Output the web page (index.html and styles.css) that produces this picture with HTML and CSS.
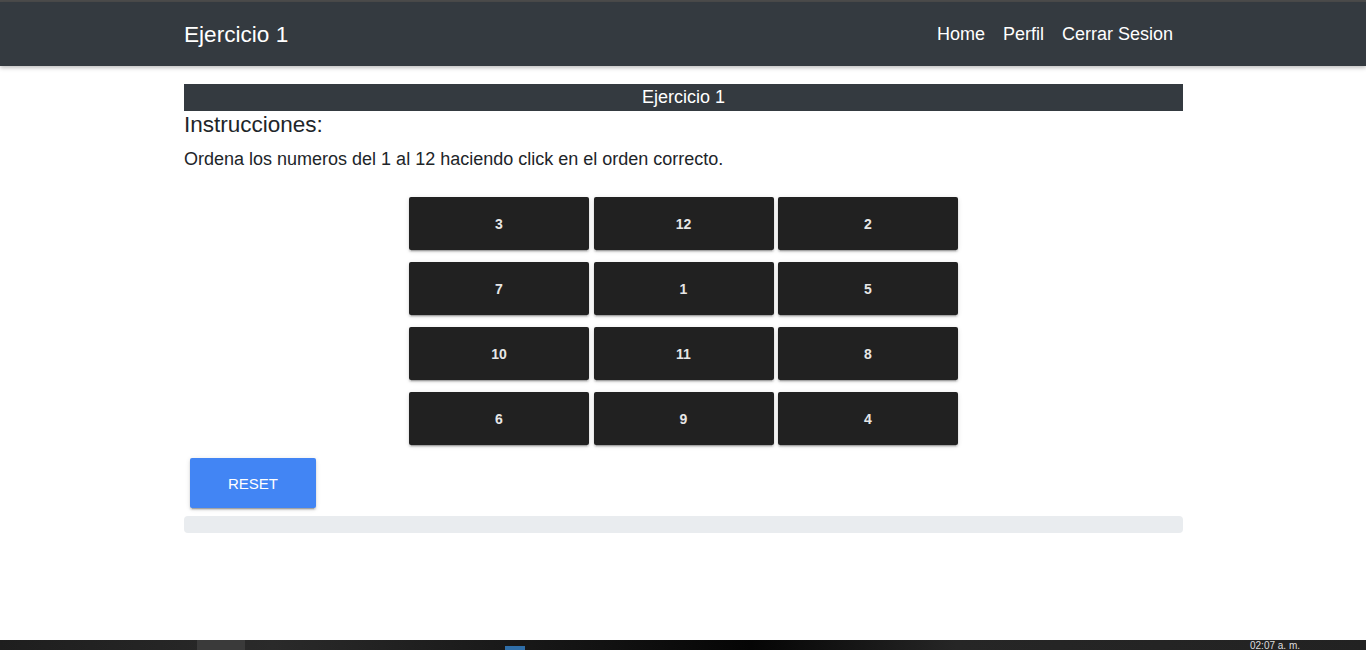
FILE: index.html
```html
<!DOCTYPE html>
<html lang="es">
<head>
<meta charset="utf-8">
<title>Ejercicio 1</title>
<link rel="stylesheet" href="styles.css">
</head>
<body>
<div class="page">
  <nav class="navbar">
    <div class="container nav-inner">
      <a class="brand" href="#">Ejercicio 1</a>
      <ul class="nav-links">
        <li><a href="#">Home</a></li>
        <li><a href="#">Perfil</a></li>
        <li><a href="#">Cerrar Sesion</a></li>
      </ul>
    </div>
  </nav>
  <main class="container main">
    <div class="title-bar">Ejercicio 1</div>
    <h2 class="instr-title">Instrucciones:</h2>
    <p class="instr-text">Ordena los numeros del 1 al 12 haciendo click en el orden correcto.</p>
    <div class="grid">
      <button class="tile">3</button>
      <button class="tile">12</button>
      <button class="tile">2</button>
      <button class="tile">7</button>
      <button class="tile">1</button>
      <button class="tile">5</button>
      <button class="tile">10</button>
      <button class="tile">11</button>
      <button class="tile">8</button>
      <button class="tile">6</button>
      <button class="tile">9</button>
      <button class="tile">4</button>
    </div>
    <button class="reset">RESET</button>
    <div class="progress"></div>
  </main>
</div>
<div class="taskbar">
  <span class="tb-item tb-a"></span>
  <span class="tb-item tb-b"></span>
  <span class="tb-time">02:07 a. m.</span>
</div>
</body>
</html>
```
FILE: styles.css
```css
* { box-sizing: border-box; }
html, body { margin: 0; padding: 0; }
body {
  font-family: "Liberation Sans", Arial, sans-serif;
  color: #212529;
  background: #fff;
  height: 650px;
  overflow: hidden;
  display: flex;
  flex-direction: column;
}
.page { flex: 1; border-top: 2px solid #4b4b4b; }
.container { width: 999px; margin: 0 0 0 184px; }
.navbar {
  background: #343a40;
  height: 64px;
  box-shadow: 0 2px 4px rgba(0,0,0,0.25);
  position: relative;
}
.nav-inner {
  height: 100%;
  display: flex;
  align-items: center;
  justify-content: space-between;
}
.brand {
  color: #fff;
  text-decoration: none;
  font-size: 22.6px;
  padding-top: 1px;
}
.nav-links {
  list-style: none;
  margin: 0;
  padding: 1px 10px 0 0;
  display: flex;
  gap: 18px;
}
.nav-links a {
  color: #fff;
  text-decoration: none;
  font-size: 18px;
}
.main { padding-top: 18px; }
.title-bar {
  background: #343a40;
  color: #fff;
  text-align: center;
  font-size: 18px;
  height: 27px;
  line-height: 27px;
}
.instr-title {
  margin: 1px 0 0;
  font-size: 22.5px;
  font-weight: normal;
  line-height: 26px;
}
.instr-text {
  margin: 10px 0 0;
  font-size: 18px;
  line-height: 23px;
}
.grid {
  margin: 26px auto 0;
  width: 549px;
  display: grid;
  grid-template-columns: 180px 180px 180px;
  column-gap: 4.5px;
  row-gap: 12px;
}
.tile {
  height: 53px;
  background: #212121;
  color: #e6e6e6;
  border: none;
  border-radius: 2px;
  font-family: "Liberation Sans", Arial, sans-serif;
  font-size: 14px;
  font-weight: bold;
  box-shadow: 0 2px 2px rgba(0,0,0,0.14), 0 1px 5px rgba(0,0,0,0.12), 0 3px 1px -2px rgba(0,0,0,0.2);
  cursor: pointer;
}
.reset {
  display: block;
  margin: 13px 0 0 6px;
  width: 126px;
  height: 50px;
  background: #4285f4;
  color: #fff;
  border: none;
  border-radius: 2px;
  font-family: "Liberation Sans", Arial, sans-serif;
  font-size: 15px;
  box-shadow: 0 2px 2px rgba(0,0,0,0.14), 0 1px 5px rgba(0,0,0,0.12), 0 3px 1px -2px rgba(0,0,0,0.2);
}
.progress {
  margin-top: 8px;
  height: 17px;
  background: #e9ecef;
  border-radius: 4px;
}
.taskbar {
  height: 10px;
  background: linear-gradient(90deg, #1e1e1e 0%, #2a2a2a 20%, #111 45%, #050505 55%, #262626 70%, #222 100%);
  position: relative;
  flex: none;
}
.tb-item { position: absolute; top: 0; height: 10px; }
.tb-a { left: 197px; width: 48px; background: #3a3a3a; }
.tb-b { left: 505px; width: 20px; background: #2f6ea8; height: 4px; top: 6px; }
.tb-time {
  position: absolute;
  left: 1250px;
  top: 1px;
  color: #ddd;
  font-size: 10px;
  line-height: 10px;
  font-family: "Liberation Sans", sans-serif;
}
```
